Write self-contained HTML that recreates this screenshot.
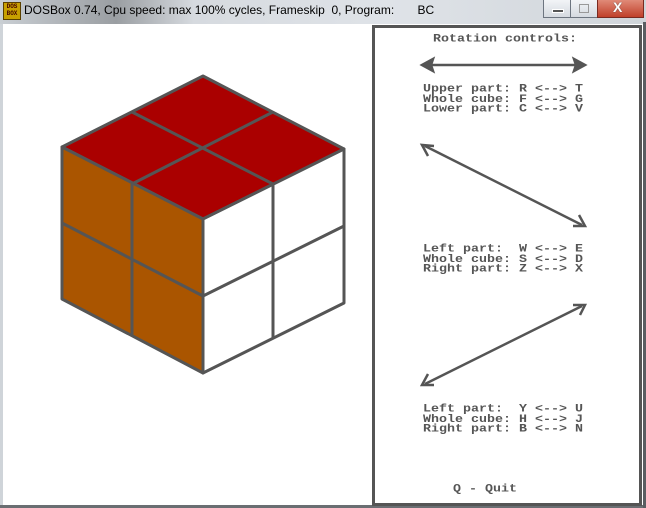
<!DOCTYPE html>
<html><head><style>
body{margin:0;width:646px;height:508px;overflow:hidden;background:#cfd4d9;position:relative;font-family:"Liberation Sans",sans-serif}
.title{position:absolute;left:0;top:0;width:646px;height:24px;background:linear-gradient(90deg,#c9ced3 0,#9a9ea2 18%,#d6dadf 30%,#dfe3e8 60%,#d0d5da 100%)}
.tt{position:absolute;left:24px;top:3px;font-size:12px;color:#000;white-space:pre}
.ico{position:absolute;left:3px;top:2px;width:16px;height:16px;background:#c8a000;border:1px solid #5a4000;font:bold 6px "Liberation Mono",monospace;color:#400;line-height:7px;text-align:center}
.btn{position:absolute;top:0;height:17px;border:1px solid #6d7580;border-top:none;background:linear-gradient(#f2f4f7,#d5dae0)}
.client{position:absolute;left:3px;top:24px;width:640px;height:481px;background:#fff}
.mono{position:absolute;font-family:"Liberation Mono",monospace;font-size:13.33px;line-height:12.5px;color:#555;white-space:pre;font-weight:bold;transform:scaleY(.8);transform-origin:0 0}
</style></head><body>
<div class="title"></div>
<div class="ico">DOS<br>BOX</div>
<div class="tt">DOSBox 0.74, Cpu speed: max 100% cycles, Frameskip  0, Program:       BC</div>
<div class="btn" style="left:543px;width:26px"><div style="position:absolute;left:8px;top:9px;width:10px;height:2px;background:#555;border:1px solid #fff"></div></div>
<div class="btn" style="left:570px;width:26px"><div style="position:absolute;left:8px;top:4px;width:8px;height:7px;border:1px solid #999"></div></div>
<div class="btn" style="left:597px;width:45px;background:linear-gradient(#e08a78,#c0402a);border-color:#7a2a20"><div style="position:absolute;left:15px;top:-1px;color:#fff;font:bold 14px 'Liberation Sans';text-shadow:0 0 1px #333">X</div></div>
<div class="client"></div>
<div style="position:absolute;left:0;top:505px;width:646px;height:3px;background:#6a6e72"></div>
<div style="position:absolute;left:643px;top:22px;width:3px;height:486px;background:#5a5e62"></div>
<svg width="646" height="508" style="position:absolute;left:0;top:0">
<rect x="373.5" y="26.5" width="267" height="478" fill="none" stroke="#555" stroke-width="3"/>
<g stroke="#555" stroke-width="3" stroke-linejoin="round">
<polygon points="203,76 344,149 203,219 62,147" fill="#aa0000"/>
<polygon points="62,147 203,219 203,373 62,299" fill="#aa5500"/>
<polygon points="203,219 344,149 344,303 203,373" fill="#fff"/>
<line x1="132" y1="112" x2="273" y2="184"/>
<line x1="273" y1="112" x2="132" y2="184"/>
<line x1="62" y1="223" x2="203" y2="296"/>
<line x1="132" y1="184" x2="132" y2="336"/>
<line x1="203" y1="296" x2="344" y2="226"/>
<line x1="273" y1="184" x2="273" y2="338"/>
</g>
<g stroke="#555" stroke-width="2.5" fill="#555">
<line x1="425" y1="65" x2="582" y2="65"/>
<polygon points="422,65 433,59 431,65 433,71"/><polygon points="585,65 574,59 576,65 574,71"/>
<line x1="425" y1="146" x2="582" y2="225"/>
<polyline points="434,146 422,145 428,156" fill="none"/>
<polyline points="573,226 585,226 579,215" fill="none"/>
<line x1="582" y1="306" x2="425" y2="384"/>
<polyline points="573,305 585,305 580,315" fill="none"/>
<polyline points="428,374 422,385 434,385" fill="none"/>
</g>
</svg>
<div class="mono" style="left:433px;top:35px">Rotation controls:</div>
<div class="mono" style="left:423px;top:85px">Upper part: R &lt;--&gt; T
Whole cube: F &lt;--&gt; G
Lower part: C &lt;--&gt; V</div>
<div class="mono" style="left:423px;top:245px">Left part:  W &lt;--&gt; E
Whole cube: S &lt;--&gt; D
Right part: Z &lt;--&gt; X</div>
<div class="mono" style="left:423px;top:405px">Left part:  Y &lt;--&gt; U
Whole cube: H &lt;--&gt; J
Right part: B &lt;--&gt; N</div>
<div class="mono" style="left:453px;top:485px">Q - Quit</div>
</body></html>
